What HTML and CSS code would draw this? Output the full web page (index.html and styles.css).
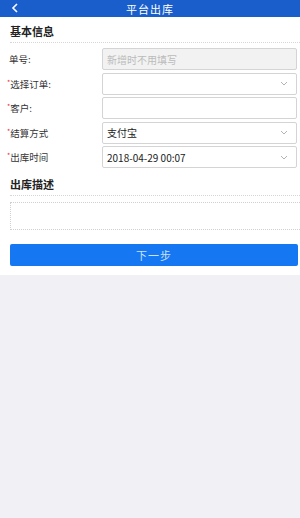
FILE: index.html
```html
<!DOCTYPE html>
<html lang="zh-CN">
<head>
    <meta charset="UTF-8">
    <meta name="viewport" content="width=device-width, initial-scale=1.0">
    <title>平台出库</title>
    <link rel="stylesheet" href="styles.css">
</head>
<body>
    <div class="page">
        <div class="header">
            <svg class="back" width="8" height="10" viewBox="0 0 8 10"><path d="M6 1 L2 5 L6 9" fill="none" stroke="#fff" stroke-width="1.6"/></svg>
            <span class="title">平台出库</span>
        </div>

        <div class="section-title">基本信息</div>

        <div class="form">
            <div class="row">
                <label>单号:</label>
                <div class="field disabled"><span class="placeholder">新增时不用填写</span></div>
            </div>
            <div class="row">
                <label><i>*</i>选择订单:</label>
                <div class="field"><span></span><svg class="arrow" width="8" height="5" viewBox="0 0 8 5"><path d="M1 1 L4 4 L7 1" fill="none" stroke="#aaa" stroke-width="0.9"/></svg></div>
            </div>
            <div class="row">
                <label><i>*</i>客户:</label>
                <div class="field"></div>
            </div>
            <div class="row">
                <label><i>*</i>结算方式</label>
                <div class="field"><span>支付宝</span><svg class="arrow" width="8" height="5" viewBox="0 0 8 5"><path d="M1 1 L4 4 L7 1" fill="none" stroke="#aaa" stroke-width="0.9"/></svg></div>
            </div>
            <div class="row">
                <label><i>*</i>出库时间</label>
                <div class="field"><span>2018-04-29 00:07</span><svg class="arrow" width="8" height="5" viewBox="0 0 8 5"><path d="M1 1 L4 4 L7 1" fill="none" stroke="#aaa" stroke-width="0.9"/></svg></div>
            </div>
        </div>

        <div class="section-title">出库描述</div>
        <div class="desc"></div>

        <button class="next">下一步</button>
    </div>
</body>
</html>
```

FILE: styles.css
```css
body {
    margin: 0;
    background-color: #f1f0f5;
    font-family: "Noto Sans CJK SC", "Liberation Sans", sans-serif;
    color: #222;
}

.page {
    background-color: #fff;
    height: 275px;
}

.header {
    height: 17px;
    background-color: #1a5ecb;
    display: flex;
    align-items: center;
    justify-content: center;
    position: relative;
}

.back {
    position: absolute;
    left: 11px;
    top: 3px;
}

.title {
    color: #fff;
    font-size: 11px;
    letter-spacing: 1px;
}

.section-title {
    margin-left: 10px;
    height: 25px;
    line-height: 28px;
    font-size: 11px;
    font-weight: bold;
    border-bottom: 1px dotted #d6d6d6;
}

.form {
    display: flex;
    flex-direction: column;
    gap: 2.5px;
    padding-top: 5px;
    padding-bottom: 2px;
}

.row {
    display: flex;
    align-items: center;
    height: 22px;
}

.row label {
    width: 102px;
    padding-left: 9px;
    box-sizing: border-box;
    font-size: 9.5px;
    color: #333;
}

.row label i {
    color: #e23;
    font-style: normal;
    font-size: 7px;
    vertical-align: top;
    margin-left: -2px;
}

.field {
    width: 195px;
    height: 22px;
    box-sizing: border-box;
    border: 1px solid #d4d4d4;
    border-radius: 2px;
    display: flex;
    align-items: center;
    justify-content: space-between;
    padding: 0 8px 0 4px;
    font-size: 10px;
    color: #222;
}

.field.disabled {
    background-color: #f2f2f2;
}

.placeholder {
    color: #bbb;
}

.desc {
    margin: 6px 0 0 10px;
    height: 26px;
    border: 1px dotted #d0d0d0;
    border-right: none;
}

.next {
    display: block;
    margin: 14px 2px 0 10px;
    width: 288px;
    height: 22px;
    border: none;
    border-radius: 2px;
    background-color: #1677f2;
    color: #cfe0f7;
    font-family: inherit;
    font-size: 11px;
    letter-spacing: 1px;
    padding: 0;
}
```
